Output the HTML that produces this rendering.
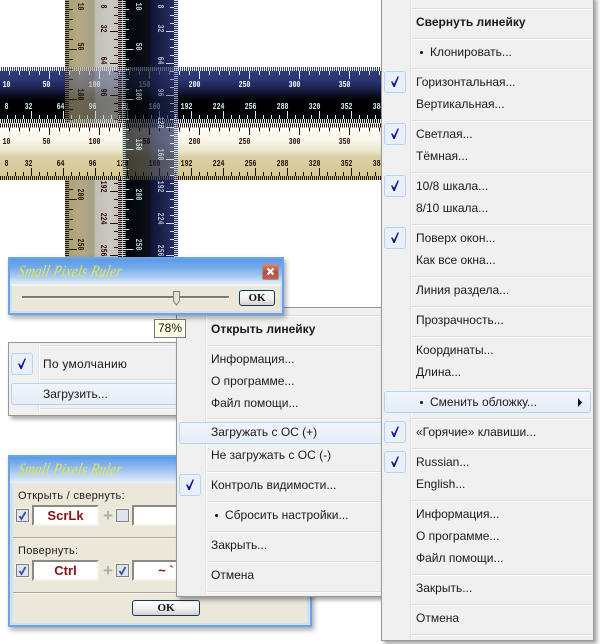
<!DOCTYPE html>
<html><head><meta charset="utf-8"><style>
html,body{margin:0;padding:0;background:#fff}
body{width:600px;height:644px;position:relative;overflow:hidden;font-family:"Liberation Sans",sans-serif;font-size:12px;color:#111}
.a{position:absolute}
svg{position:absolute;left:0;top:0}
.m{position:absolute;background:#f0f0f0;border:1px solid #979797;box-sizing:border-box;box-shadow:3px 3px 4px rgba(0,0,0,.35)}
.g{position:absolute;width:1px;background:#e2e3e3;border-right:1px solid #fff}
.s{position:absolute;height:1px;background:#dcdcdc;border-bottom:1px solid #fff}
.t{position:absolute;line-height:14px;white-space:nowrap;color:#1a1a1a}
.b{font-weight:bold}
.h{position:absolute;box-sizing:border-box;border:1px solid #b4d3f8;border-radius:3px;background:linear-gradient(#f0f4fb,#e6edf8);height:22px}
.c{position:absolute;box-sizing:border-box;width:22px;height:22px;border:1px solid #b4d3f8;border-radius:3px;background:#eaf0fa}
.c svg{left:-1px;top:-1px}
.f{position:absolute;background:#fff;box-sizing:border-box;border:2px solid;border-color:#8a8a80 #f4f2ea #f4f2ea #8a8a80;text-align:center;font-weight:bold;color:#8b1010;font-size:13px;line-height:17px}
.x{position:absolute;width:13px;height:13px;box-sizing:border-box;border:1px solid #7f7f7f;background:#dfe4ef;outline:1px solid #f4f2ea}
.x svg{left:-1px;top:-1px}
.ok{position:absolute;box-sizing:border-box;border:1px solid #123a5c;border-radius:3px;background:linear-gradient(#fff,#eee 60%,#d0d0d0);text-align:center;font:bold 11px/14px "Liberation Serif",serif;color:#111}
.ttl{position:absolute;font:italic 15px/20px "Liberation Serif",serif;color:#e6e84a;white-space:nowrap;transform:skewX(-12deg) scale(.87,1.1);transform-origin:0 100%;letter-spacing:.4px}
.l{position:absolute;font-size:11px;line-height:14px;color:#1a1a1a;white-space:nowrap;letter-spacing:.3px}
.r text{font-family:"Liberation Mono",monospace;font-size:10px;font-weight:bold;text-anchor:end}
</style></head><body>

<svg width="600" height="644" class="r">
<defs>
<linearGradient id="gd" x1="0" y1="0" x2="0" y2="1"><stop offset="0" stop-color="#2f3f80"/><stop offset=".24" stop-color="#2a3570"/><stop offset=".38" stop-color="#1c2450"/><stop offset=".48" stop-color="#0e1228"/><stop offset=".6" stop-color="#000"/><stop offset="1" stop-color="#000"/></linearGradient>
<linearGradient id="gl" x1="0" y1="0" x2="0" y2="1"><stop offset="0" stop-color="#fffefa"/><stop offset=".3" stop-color="#f9f7ec"/><stop offset=".48" stop-color="#ece6cc"/><stop offset=".6" stop-color="#d9d0a6"/><stop offset="1" stop-color="#d5c78f"/></linearGradient>
<linearGradient id="gb" x1="0" y1="0" x2="1" y2="0"><stop offset="0" stop-color="#a99f77"/><stop offset=".26" stop-color="#b3a981"/><stop offset=".5" stop-color="#a8a088"/><stop offset=".54" stop-color="#c0bfb5"/><stop offset=".8" stop-color="#cacac4"/><stop offset="1" stop-color="#c2c2b8"/></linearGradient>
<linearGradient id="gv" x1="0" y1="0" x2="1" y2="0"><stop offset="0" stop-color="#000"/><stop offset=".48" stop-color="#0a0f18"/><stop offset=".54" stop-color="#10173a"/><stop offset="1" stop-color="#2a3468"/></linearGradient>
<clipPath id="c1"><rect x="65" y="67" width="57" height="56"/></clipPath>
<clipPath id="c2"><rect x="122" y="67" width="56" height="56"/></clipPath>
<clipPath id="c3"><rect x="122" y="123" width="56" height="57"/></clipPath>
<g id="hdt" stroke="#f2f6ff">
<rect x="0" y="67" width="381" height="56" fill="url(#gd)" stroke="none"/>
<line x1="0" x2="381" y1="69" y2="69" stroke-width="4" stroke-dasharray="1 1"/>
<line x1="9" x2="381" y1="73" y2="73" stroke-width="4" stroke-dasharray="1 9"/>
<line x1="49" x2="381" y1="77" y2="77" stroke-width="4" stroke-dasharray="1 49"/>
<g stroke="#cfeeee">
<line x1="0" x2="381" y1="121" y2="121" stroke-width="4" stroke-dasharray="1 1"/>
<line x1="7" x2="381" y1="117" y2="117" stroke-width="4" stroke-dasharray="1 7"/>
<line x1="31" x2="381" y1="113" y2="113" stroke-width="4" stroke-dasharray="1 31"/>
</g>
</g>
<g id="hlt" stroke="#2e0a0a">
<rect x="0" y="123" width="381" height="57" fill="url(#gl)" stroke="none"/>
<line x1="0" x2="381" y1="125.5" y2="125.5" stroke-width="4" stroke-dasharray="1 1"/>
<line x1="9" x2="381" y1="129.5" y2="129.5" stroke-width="4" stroke-dasharray="1 9"/>
<line x1="49" x2="381" y1="133" y2="133" stroke-width="4" stroke-dasharray="1 49"/>
<g stroke="#1c1406">
<line x1="0" x2="381" y1="178" y2="178" stroke-width="4" stroke-dasharray="1 1"/>
<line x1="7" x2="381" y1="174" y2="174" stroke-width="4" stroke-dasharray="1 7"/>
<line x1="31" x2="381" y1="170" y2="170" stroke-width="4" stroke-dasharray="1 31"/>
</g>
</g>
</defs>

<use href="#hdt"/>
<g fill="#f2f6ff">
<text transform="translate(10.5,87) scale(.66,.94)">10</text>
<text transform="translate(50.5,87) scale(.66,.94)">50</text>
<text transform="translate(200.5,87) scale(.66,.94)">200</text>
<text transform="translate(250.5,87) scale(.66,.94)">250</text>
<text transform="translate(300.5,87) scale(.66,.94)">300</text>
<text transform="translate(350.5,87) scale(.66,.94)">350</text>
</g>
<g fill="#cff0f0">
<text transform="translate(8.5,109) scale(.66,.94)">8</text>
<text transform="translate(32.5,109) scale(.66,.94)">32</text>
<text transform="translate(64.5,109) scale(.66,.94)">64</text>
<text transform="translate(192.5,109) scale(.66,.94)">192</text>
<text transform="translate(224.5,109) scale(.66,.94)">224</text>
<text transform="translate(256.5,109) scale(.66,.94)">256</text>
<text transform="translate(288.5,109) scale(.66,.94)">288</text>
<text transform="translate(320.5,109) scale(.66,.94)">320</text>
<text transform="translate(352.5,109) scale(.66,.94)">352</text>
<text transform="translate(384.5,109) scale(.66,.94)">384</text>
</g>

<!-- vertical beige -->
<rect x="65" y="0" width="57" height="258" fill="url(#gb)"/>
<g stroke="#241a08">
<line x1="67" x2="67" y1="1" y2="258" stroke-width="4" stroke-dasharray="1 1"/>
<line x1="71" x2="71" y1="9" y2="258" stroke-width="4" stroke-dasharray="1 9"/>
<line x1="75" x2="75" y1="49" y2="258" stroke-width="4" stroke-dasharray="1 49"/>
</g>
<g stroke="#2e0a0a">
<line x1="120" x2="120" y1="0" y2="258" stroke-width="4" stroke-dasharray="1 1"/>
<line x1="116" x2="116" y1="7" y2="258" stroke-width="4" stroke-dasharray="1 7"/>
<line x1="112" x2="112" y1="31" y2="258" stroke-width="4" stroke-dasharray="1 31"/>
</g>
<g fill="#241a08">
<text transform="translate(78,10.5) rotate(90) scale(.66,.94)">10</text>
<text transform="translate(78,50.5) rotate(90) scale(.66,.94)">50</text>
<text transform="translate(78,100.5) rotate(90) scale(.66,.94)">100</text>
<text transform="translate(78,200.5) rotate(90) scale(.66,.94)">200</text>
<text transform="translate(78,250.5) rotate(90) scale(.66,.94)">250</text>
</g>
<g fill="#2e0a0a">
<text transform="translate(101,8.5) rotate(90) scale(.66,.94)">8</text>
<text transform="translate(101,32.5) rotate(90) scale(.66,.94)">32</text>
<text transform="translate(101,64.5) rotate(90) scale(.66,.94)">64</text>
<text transform="translate(101,96.5) rotate(90) scale(.66,.94)">96</text>
<text transform="translate(101,192.5) rotate(90) scale(.66,.94)">192</text>
<text transform="translate(101,224.5) rotate(90) scale(.66,.94)">224</text>
<text transform="translate(101,256.5) rotate(90) scale(.66,.94)">256</text>
</g>

<!-- light horizontal -->
<use href="#hlt"/>
<g fill="#2e0a0a">
<text transform="translate(10.5,144) scale(.66,.94)">10</text>
<text transform="translate(50.5,144) scale(.66,.94)">50</text>
<text transform="translate(100.5,144) scale(.66,.94)">100</text>
<text transform="translate(200.5,144) scale(.66,.94)">200</text>
<text transform="translate(250.5,144) scale(.66,.94)">250</text>
<text transform="translate(300.5,144) scale(.66,.94)">300</text>
<text transform="translate(350.5,144) scale(.66,.94)">350</text>
</g>
<g fill="#1c1406">
<text transform="translate(8.5,166) scale(.66,.94)">8</text>
<text transform="translate(32.5,166) scale(.66,.94)">32</text>
<text transform="translate(64.5,166) scale(.66,.94)">64</text>
<text transform="translate(96.5,166) scale(.66,.94)">96</text>
<text transform="translate(128.5,166) scale(.66,.94)">128</text>
<text transform="translate(192.5,166) scale(.66,.94)">192</text>
<text transform="translate(224.5,166) scale(.66,.94)">224</text>
<text transform="translate(256.5,166) scale(.66,.94)">256</text>
<text transform="translate(288.5,166) scale(.66,.94)">288</text>
<text transform="translate(320.5,166) scale(.66,.94)">320</text>
<text transform="translate(352.5,166) scale(.66,.94)">352</text>
<text transform="translate(384.5,166) scale(.66,.94)">384</text>
</g>

<!-- vertical dark -->
<rect x="122" y="0" width="56" height="258" fill="url(#gv)"/>
<g stroke="#bfe6e0">
<line x1="124" x2="124" y1="1" y2="258" stroke-width="3.5" stroke-dasharray="1 1"/>
<line x1="127" x2="127" y1="9" y2="258" stroke-width="4" stroke-dasharray="1 9"/>
<line x1="131" x2="131" y1="49" y2="258" stroke-width="5" stroke-dasharray="1 49"/>
</g>
<g stroke="#d4daea">
<line x1="176" x2="176" y1="0" y2="258" stroke-width="4" stroke-dasharray="1 1"/>
<line x1="172" x2="172" y1="7" y2="258" stroke-width="4" stroke-dasharray="1 7"/>
<line x1="168" x2="168" y1="31" y2="258" stroke-width="4" stroke-dasharray="1 31"/>
</g>
<line x1="122.5" x2="122.5" y1="0" y2="258" stroke="#fff" stroke-width=".8" opacity=".8"/>
<g fill="#b4d2d2">
<text transform="translate(136,10.5) rotate(90) scale(.66,.94)">10</text>
<text transform="translate(136,50.5) rotate(90) scale(.66,.94)">50</text>
<text transform="translate(136,100.5) rotate(90) scale(.66,.94)">100</text>
<text transform="translate(136,150.5) rotate(90) scale(.66,.94)">150</text>
<text transform="translate(136,200.5) rotate(90) scale(.66,.94)">200</text>
<text transform="translate(136,250.5) rotate(90) scale(.66,.94)">250</text>
</g>
<g fill="#b0b8d4">
<text transform="translate(158,8.5) rotate(90) scale(.66,.94)">8</text>
<text transform="translate(158,32.5) rotate(90) scale(.66,.94)">32</text>
<text transform="translate(158,64.5) rotate(90) scale(.66,.94)">64</text>
<text transform="translate(158,96.5) rotate(90) scale(.66,.94)">96</text>
<text transform="translate(158,128.5) rotate(90) scale(.66,.94)">128</text>
<text transform="translate(158,160.5) rotate(90) scale(.66,.94)">160</text>
<text transform="translate(158,192.5) rotate(90) scale(.66,.94)">192</text>
<text transform="translate(158,224.5) rotate(90) scale(.66,.94)">224</text>
<text transform="translate(158,256.5) rotate(90) scale(.66,.94)">256</text>
</g>

<!-- crossings -->
<g clip-path="url(#c1)"><g style="mix-blend-mode:screen" opacity=".4"><use href="#hdt"/>
<g fill="#f2f6ff"><text transform="translate(100.5,87) scale(.66,.94)">100</text><text transform="translate(96.5,109) scale(.66,.94)">96</text></g></g></g>
<g clip-path="url(#c2)"><g style="mix-blend-mode:screen" opacity=".3"><use href="#hdt"/>
<g fill="#f2f6ff"><text transform="translate(150.5,87) scale(.66,.94)">150</text><text transform="translate(160.5,109) scale(.66,.94)">160</text><text transform="translate(128.5,109) scale(.66,.94)">128</text></g></g></g>
<g clip-path="url(#c3)"><g style="mix-blend-mode:screen" opacity=".3"><use href="#hlt"/>
<g fill="#1c1406"><text transform="translate(150.5,144) scale(.66,.94)">150</text><text transform="translate(160.5,166) scale(.66,.94)">160</text><text transform="translate(128.5,166) scale(.66,.94)">128</text></g></g></g>
</svg>

<!-- small menu -->
<div class="m" style="left:8px;top:342px;width:172px;height:74px">
<div class="g" style="left:29px;top:2px;height:68px"></div>
<div class="s" style="left:31px;top:2px;width:140px"></div>
<div class="s" style="left:31px;top:36px;width:140px"></div>
<div class="s" style="left:31px;top:65px;width:140px"></div>
</div>
<div class="c" style="left:11px;top:353px"><svg width="22" height="22"><path d="M7 10.500L8.600 10.500L10 13L13.600 5.500L15 5.500L10.800 16L9.400 16Z" fill="#14148c"/></svg></div>
<div class="t" style="left:43px;top:357px;letter-spacing:.25px">По умолчанию</div>
<div class="h" style="left:11px;top:383px;width:170px"></div>
<div class="t" style="left:43px;top:387px">Загрузить...</div>

<!-- window 2 -->
<div class="a" style="left:8px;top:455px;width:304px;height:172px;box-sizing:border-box;border:2px solid #69a3ea;background:#cfe0f6;box-shadow:2px 3px 5px rgba(0,0,0,.35)"></div>
<div class="a" style="left:10px;top:457px;width:300px;height:26px;background:linear-gradient(#5b9aea 0,#8fb9ee 10px,#e8f0fa 26px)"></div>
<div class="a" style="left:13px;top:483px;width:294px;height:140px;background:#ebe8da"></div>
<div class="ttl" style="left:16px;top:461px">Small Pixels Ruler</div>
<div class="l" style="left:18px;top:489px">Открыть / свернуть:</div>
<div class="x" style="left:16px;top:509px"><svg width="13" height="13"><path d="M3.500 7L5.500 10L9.500 3" fill="none" stroke="#3a4fa8" stroke-width="1.800"/></svg></div>
<div class="f" style="left:32px;top:505px;width:67px;height:21px">ScrLk</div>
<div class="a" style="left:103px;top:507px;font:bold 17px/17px 'Liberation Sans',sans-serif;color:#aeaea0">+</div>
<div class="x" style="left:116px;top:509px"></div>
<div class="f" style="left:132px;top:505px;width:60px;height:21px"></div>
<div class="a" style="left:13px;top:537px;width:294px;height:1px;background:#a8a8a0;border-bottom:1px solid #f6f4ec"></div>
<div class="l" style="left:18px;top:544px">Повернуть:</div>
<div class="x" style="left:16px;top:564px"><svg width="13" height="13"><path d="M3.500 7L5.500 10L9.500 3" fill="none" stroke="#3a4fa8" stroke-width="1.800"/></svg></div>
<div class="f" style="left:32px;top:560px;width:67px;height:21px">Ctrl</div>
<div class="a" style="left:103px;top:562px;font:bold 17px/17px 'Liberation Sans',sans-serif;color:#aeaea0">+</div>
<div class="x" style="left:116px;top:564px"><svg width="13" height="13"><path d="M3.500 7L5.500 10L9.500 3" fill="none" stroke="#3a4fa8" stroke-width="1.800"/></svg></div>
<div class="f" style="left:132px;top:560px;width:60px;height:21px;padding-left:8px">~ `</div>
<div class="a" style="left:13px;top:592px;width:294px;height:1px;background:#a8a8a0;border-bottom:1px solid #f6f4ec"></div>
<div class="ok" style="left:132px;top:600px;width:68px;height:16px">OK</div>

<!-- middle menu -->
<div class="m" style="left:176px;top:307px;width:210px;height:290px">
<div class="g" style="left:28px;top:2px;height:285px"></div>
<div class="s" style="left:30px;top:7px;width:180px"></div>
<div class="s" style="left:30px;top:37px;width:180px"></div>
<div class="s" style="left:30px;top:110px;width:180px"></div>
<div class="s" style="left:30px;top:163px;width:180px"></div>
<div class="s" style="left:30px;top:193px;width:180px"></div>
<div class="s" style="left:30px;top:223px;width:180px"></div>
<div class="s" style="left:30px;top:253px;width:180px"></div>
<div class="s" style="left:30px;top:283px;width:180px"></div>
</div>
<div class="t b" style="left:211px;top:322px">Открыть линейку</div>
<div class="t" style="left:211px;top:352px">Информация...</div>
<div class="t" style="left:211px;top:374px">О программе...</div>
<div class="t" style="left:211px;top:396px">Файл помощи...</div>
<div class="h" style="left:179px;top:422px;width:210px"></div>
<div class="t" style="left:211px;top:425px">Загружать с ОС (+)</div>
<div class="t" style="left:211px;top:448px">Не загружать с ОС (-)</div>
<div class="c" style="left:179px;top:474px"><svg width="22" height="22"><path d="M7 10.500L8.600 10.500L10 13L13.600 5.500L15 5.500L10.800 16L9.400 16Z" fill="#14148c"/></svg></div>
<div class="t" style="left:211px;top:478px">Контроль видимости...</div>
<div class="a" style="left:215px;top:514px;width:3px;height:3px;border-radius:50%;background:#111"></div>
<div class="t" style="left:225px;top:508px">Сбросить настройки...</div>
<div class="t" style="left:211px;top:538px">Закрыть...</div>
<div class="t" style="left:211px;top:568px">Отмена</div>

<!-- window 1 -->
<div class="a" style="left:8px;top:257px;width:276px;height:58px;box-sizing:border-box;border:2px solid #69a3ea;background:#cfe0f6;box-shadow:2px 3px 5px rgba(0,0,0,.35)"></div>
<div class="a" style="left:10px;top:259px;width:272px;height:26px;background:linear-gradient(#5b9aea 0,#72a9ec 8px,#adcbf1 18px,#eef3fb 26px)"></div>
<div class="a" style="left:12px;top:285px;width:268px;height:26px;background:#ebe8da;border-top:1px solid #f8f6ee;box-sizing:border-box"></div>
<div class="ttl" style="left:16px;top:263px">Small Pixels Ruler</div>
<div class="a" style="left:262px;top:263px;width:17px;height:17px;box-sizing:border-box;border:1px solid #8f9aa8;background:linear-gradient(#d88a78,#b9483a 55%,#cc5f4c);border-radius:2px"><svg width="15" height="15"><path d="M4.500 4.500L10.500 10.500M10.500 4.500L4.500 10.500" stroke="#fff" stroke-width="2.200"/></svg></div>
<div class="a" style="left:22px;top:296px;width:207px;height:2px;background:#7a7a78;border-bottom:1px solid #fafaf4"></div>
<svg style="left:172px;top:290px" width="9" height="16"><path d="M1.500 1.500H7.500V11L4.500 15L1.500 11Z" fill="#e4e2d8" stroke="#80807a"/></svg>
<div class="ok" style="left:239px;top:290px;width:36px;height:16px">OK</div>

<!-- tooltip -->
<div class="a" style="left:154px;top:319px;width:32px;height:19px;box-sizing:border-box;border:1px solid #777;background:#ffffe6;text-align:center;line-height:17px;font-size:12px;color:#111">78%</div>

<!-- right menu -->
<div class="m" style="left:381px;top:-4px;width:213px;height:645px">
<div class="g" style="left:28px;top:2px;height:640px"></div>
<div class="s" style="left:30px;top:11px;width:180px"></div>
<div class="s" style="left:30px;top:41px;width:180px"></div>
<div class="s" style="left:30px;top:71px;width:180px"></div>
<div class="s" style="left:30px;top:123px;width:180px"></div>
<div class="s" style="left:30px;top:175px;width:180px"></div>
<div class="s" style="left:30px;top:227px;width:180px"></div>
<div class="s" style="left:30px;top:279px;width:180px"></div>
<div class="s" style="left:30px;top:309px;width:180px"></div>
<div class="s" style="left:30px;top:339px;width:180px"></div>
<div class="s" style="left:30px;top:391px;width:180px"></div>
<div class="s" style="left:30px;top:421px;width:180px"></div>
<div class="s" style="left:30px;top:451px;width:180px"></div>
<div class="s" style="left:30px;top:503px;width:180px"></div>
<div class="s" style="left:30px;top:577px;width:180px"></div>
<div class="s" style="left:30px;top:607px;width:180px"></div>
<div class="s" style="left:30px;top:637px;width:180px"></div>
</div>
<div class="t b" style="left:416px;top:15px">Свернуть линейку</div>
<div class="a" style="left:420px;top:51px;width:3px;height:3px;border-radius:50%;background:#111"></div>
<div class="t" style="left:430px;top:45px">Клонировать...</div>
<div class="c" style="left:384px;top:71px"><svg width="22" height="22"><path d="M7 10.500L8.600 10.500L10 13L13.600 5.500L15 5.500L10.800 16L9.400 16Z" fill="#14148c"/></svg></div>
<div class="t" style="left:416px;top:75px">Горизонтальная...</div>
<div class="t" style="left:416px;top:97px">Вертикальная...</div>
<div class="c" style="left:384px;top:123px"><svg width="22" height="22"><path d="M7 10.500L8.600 10.500L10 13L13.600 5.500L15 5.500L10.800 16L9.400 16Z" fill="#14148c"/></svg></div>
<div class="t" style="left:416px;top:127px">Светлая...</div>
<div class="t" style="left:416px;top:149px">Тёмная...</div>
<div class="c" style="left:384px;top:175px"><svg width="22" height="22"><path d="M7 10.500L8.600 10.500L10 13L13.600 5.500L15 5.500L10.800 16L9.400 16Z" fill="#14148c"/></svg></div>
<div class="t" style="left:416px;top:179px">10/8 шкала...</div>
<div class="t" style="left:416px;top:201px">8/10 шкала...</div>
<div class="c" style="left:384px;top:227px"><svg width="22" height="22"><path d="M7 10.500L8.600 10.500L10 13L13.600 5.500L15 5.500L10.800 16L9.400 16Z" fill="#14148c"/></svg></div>
<div class="t" style="left:416px;top:231px">Поверх окон...</div>
<div class="t" style="left:416px;top:253px">Как все окна...</div>
<div class="t" style="left:416px;top:283px">Линия раздела...</div>
<div class="t" style="left:416px;top:313px">Прозрачность...</div>
<div class="t" style="left:416px;top:343px">Координаты...</div>
<div class="t" style="left:416px;top:365px">Длина...</div>
<div class="h" style="left:384px;top:391px;width:207px"></div>
<div class="a" style="left:420px;top:401px;width:3px;height:3px;border-radius:50%;background:#111"></div>
<div class="t" style="left:430px;top:395px">Сменить обложку...</div>
<svg style="left:577px;top:398px" width="6" height="9"><path d="M1 0L5 4.500L1 9Z" fill="#111"/></svg>
<div class="c" style="left:384px;top:421px"><svg width="22" height="22"><path d="M7 10.500L8.600 10.500L10 13L13.600 5.500L15 5.500L10.800 16L9.400 16Z" fill="#14148c"/></svg></div>
<div class="t" style="left:416px;top:425px">«Горячие» клавиши...</div>
<div class="c" style="left:384px;top:451px"><svg width="22" height="22"><path d="M7 10.500L8.600 10.500L10 13L13.600 5.500L15 5.500L10.800 16L9.400 16Z" fill="#14148c"/></svg></div>
<div class="t" style="left:416px;top:455px">Russian...</div>
<div class="t" style="left:416px;top:477px">English...</div>
<div class="t" style="left:416px;top:507px">Информация...</div>
<div class="t" style="left:416px;top:529px">О программе...</div>
<div class="t" style="left:416px;top:551px">Файл помощи...</div>
<div class="t" style="left:416px;top:581px">Закрыть...</div>
<div class="t" style="left:416px;top:611px">Отмена</div>

</body></html>
